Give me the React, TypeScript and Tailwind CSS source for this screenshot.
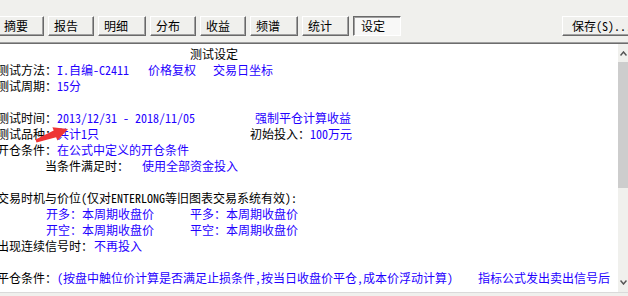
import React from 'react';

const tabs = [
  { label: '摘要', w: 'w-[46px]' },
  { label: '报告', w: 'w-[46px]' },
  { label: '明细', w: 'w-[48px]' },
  { label: '分布', w: 'w-[46px]' },
  { label: '收益', w: 'w-[46px]' },
  { label: '频谱', w: 'w-[48px]' },
  { label: '统计', w: 'w-[47px]' },
];

const B = ({ children, w }: { children: React.ReactNode; w?: string }) => (
  <span className={`inline-block text-[#1f00ff] ${w ?? ''}`}>{children}</span>
);
const K = ({ children, w }: { children: React.ReactNode; w?: string }) => (
  <span className={`inline-block text-black ${w ?? ''}`}>{children}</span>
);

function Line({ children }: { children?: React.ReactNode }) {
  return <div className="h-[16px] leading-[16px] whitespace-nowrap">{children}</div>;
}

export default function App() {
  return (
    <div className="w-[628px] h-[296px] overflow-hidden bg-[#f0f0ed] font-['Noto_Sans_Mono_CJK_SC','Noto_Sans_CJK_SC',sans-serif] text-[12px] text-black">
      {/* toolbar */}
      <div className="h-[42px] flex items-start pt-[16px]">
        <div className="flex gap-[4px] ml-[-2px]">
          {tabs.map((t) => (
            <button
              key={t.label}
              className={`${t.w} h-[20px] text-left pl-[5px] leading-[18px] bg-[#f0f0ed] border border-t-white border-l-white border-r-[#696969] border-b-[#696969] shadow-[inset_-1px_-1px_0_#a0a0a0]`}
            >
              {t.label}
            </button>
          ))}
          <button className="w-[48px] h-[20px] text-left pl-[7px] leading-[18px] bg-[#f8f8f7] border border-t-[#696969] border-l-[#696969] border-r-white border-b-white shadow-[inset_1px_1px_0_#a0a0a0]">
            设定
          </button>
        </div>
        <button className="ml-auto mr-[-20px] w-[86px] h-[20px] text-left pl-[9px] leading-[18px] bg-[#f0f0ed] border border-t-white border-l-white border-r-[#696969] border-b-[#696969] shadow-[inset_-1px_-1px_0_#a0a0a0]">
          保存(S)...
        </button>
      </div>
      <div className="h-px bg-[#a0a0a0]" />
      <div className="h-px bg-[#6d6d6d]" />

      {/* content */}
      <div className="flex h-[248px] bg-white">
        <div className="relative flex-1 overflow-hidden pt-[2px]">
          <div className="ml-[-3px]">
            <Line>
              <K w="w-[193px]"> </K>
              <K>测试设定</K>
            </Line>
            <Line>
              <K w="w-[60px]">测试方法：</K>
              <B w="w-[91px]">I.自编-C2411</B>
              <B w="w-[65px]">价格复权</B>
              <B>交易日坐标</B>
            </Line>
            <Line>
              <K w="w-[60px]">测试周期：</K>
              <B>15分</B>
            </Line>
            <Line />
            <Line>
              <K w="w-[60px]">测试时间：</K>
              <B w="w-[198px]">2013/12/31 - 2018/11/05</B>
              <B>强制平仓计算收益</B>
            </Line>
            <Line>
              <K w="w-[60px]">测试品种：</K>
              <B w="w-[193px]">共计1只</B>
              <K w="w-[60px]">初始投入：</K>
              <B>100万元</B>
            </Line>
            <Line>
              <K w="w-[60px]">开仓条件：</K>
              <B>在公式中定义的开仓条件</B>
            </Line>
            <Line>
              <K w="w-[48px]"> </K>
              <K w="w-[97px]">当条件满足时：</K>
              <B>使用全部资金投入</B>
            </Line>
            <Line />
            <Line>
              <K>交易时机与价位(仅对ENTERLONG等旧图表交易系统有效):</K>
            </Line>
            <Line>
              <K w="w-[49px]"> </K>
              <B w="w-[144px]">开多：本周期收盘价</B>
              <B>平多：本周期收盘价</B>
            </Line>
            <Line>
              <K w="w-[49px]"> </K>
              <B w="w-[144px]">开空：本周期收盘价</B>
              <B>平空：本周期收盘价</B>
            </Line>
            <Line>
              <K w="w-[97px]">出现连续信号时：</K>
              <B>不再投入</B>
            </Line>
            <Line />
            <Line>
              <K w="w-[60px]">平仓条件：</K>
              <B w="w-[421px]">(按盘中触位价计算是否满足止损条件,按当日收盘价平仓,成本价浮动计算)</B>
              <B>指标公式发出卖出信号后</B>
            </Line>
          </div>

          {/* red annotation arrow */}
          <svg className="absolute left-[30px] top-[80px]" width="42" height="22" viewBox="0 0 42 22">
            <polygon
              points="38,5 27.4,16.5 26.1,13.2 6.5,18.4 5.5,15.6 23.7,6.6 22.4,3.35"
              fill="#ee3535"
            />
          </svg>
        </div>

        {/* vertical scrollbar (cut at window edge) */}
        <div className="w-[10px] flex flex-col bg-[#f0f0ed]">
          <div className="h-[18px] flex items-center pl-[2px]">
            <svg width="7" height="5" viewBox="0 0 7 5">
              <path d="M0.5 4.5 L3.5 1 L6.5 4.5" fill="none" stroke="#555" strokeWidth="1.5" />
            </svg>
          </div>
          <div className="h-[126px] bg-[#cdcdcd]" />
          <div className="flex-1" />
          <div className="h-[16px] flex items-start pl-[2px] pt-[4px]">
            <svg width="7" height="5" viewBox="0 0 7 5">
              <path d="M0.5 0.5 L3.5 4 L6.5 0.5" fill="none" stroke="#555" strokeWidth="1.5" />
            </svg>
          </div>
        </div>
      </div>
      <div className="h-px bg-[#dadada]" />
      <div className="h-[3px] bg-[#f0f0ed]" />
    </div>
  );
}
